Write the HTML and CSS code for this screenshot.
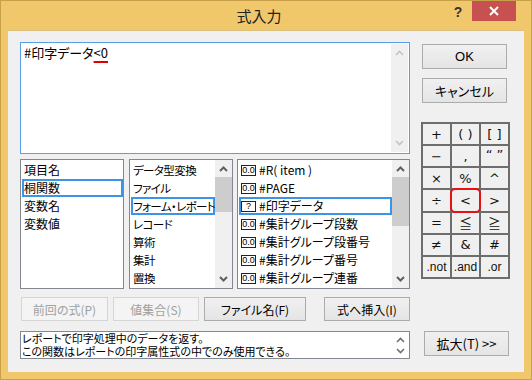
FILE: index.html
```html
<!DOCTYPE html>
<html>
<head>
	<meta charset="UTF-8">
	<title>式入力</title>
	<link rel="stylesheet" href="styles.css">
</head>
<body>
	<div class="window">
		<div class="titlebar">
			<div class="title">式入力</div>
			<div class="help">?</div>
			<div class="close">
				<svg width="10" height="10" viewBox="0 0 10 10"><path d="M1 1 L9 9 M9 1 L1 9" stroke="#fff" stroke-width="2"/></svg>
			</div>
		</div>
		<div class="client">
			<div class="left">
				<!-- 式エリア -->
				<div class="expr">
					<div class="expr-text">#印字データ<span class="err">&lt;0</span></div>
					<div class="vscroll plain">
						<svg class="arrow" width="9" height="6" viewBox="0 0 9 6"><path d="M1 5 L4.5 1.5 L8 5" stroke="#c4c4c4" stroke-width="1.6" fill="none"/></svg>
						<svg class="arrow" width="9" height="6" viewBox="0 0 9 6"><path d="M1 1 L4.5 4.5 L8 1" stroke="#c4c4c4" stroke-width="1.6" fill="none"/></svg>
					</div>
				</div>

				<!-- リスト -->
				<div class="lists">
					<div class="list list-1">
						<div class="items">
							<div class="item">項目名</div>
							<div class="item selected">桐関数</div>
							<div class="item">変数名</div>
							<div class="item">変数値</div>
						</div>
					</div>
					<div class="list list-2">
						<div class="items">
							<div class="item">データ型変換</div>
							<div class="item">ファイル</div>
							<div class="item selected">フォーム・レポート</div>
							<div class="item">レコード</div>
							<div class="item">算術</div>
							<div class="item">集計</div>
							<div class="item">置換</div>
						</div>
						<div class="vscroll">
							<svg class="arrow" width="9" height="6" viewBox="0 0 9 6"><path d="M1 5 L4.5 1.5 L8 5" stroke="#606060" stroke-width="2" fill="none"/></svg>
							<div class="thumb thumb-2"></div>
							<div class="track"></div>
							<svg class="arrow" width="9" height="6" viewBox="0 0 9 6"><path d="M1 1 L4.5 4.5 L8 1" stroke="#606060" stroke-width="2" fill="none"/></svg>
						</div>
					</div>
					<div class="list list-3">
						<div class="items">
							<div class="item"><span class="ico">0.0</span>#R( item )</div>
							<div class="item"><span class="ico">0.0</span>#PAGE</div>
							<div class="item selected"><span class="ico">?</span>#印字データ</div>
							<div class="item"><span class="ico">0.0</span>#集計グループ段数</div>
							<div class="item"><span class="ico">0.0</span>#集計グループ段番号</div>
							<div class="item"><span class="ico">0.0</span>#集計グループ番号</div>
							<div class="item"><span class="ico">0.0</span>#集計グループ連番</div>
						</div>
						<div class="vscroll">
							<svg class="arrow" width="9" height="6" viewBox="0 0 9 6"><path d="M1 5 L4.5 1.5 L8 5" stroke="#606060" stroke-width="2" fill="none"/></svg>
							<div class="thumb thumb-3"></div>
							<div class="track"></div>
							<svg class="arrow" width="9" height="6" viewBox="0 0 9 6"><path d="M1 1 L4.5 4.5 L8 1" stroke="#606060" stroke-width="2" fill="none"/></svg>
						</div>
					</div>
				</div>

				<!-- ボタン -->
				<div class="btn-row">
					<div class="btn disabled w-prev">前回の式(P)</div>
					<div class="btn disabled w-set">値集合(S)</div>
					<div class="btn w-file">ファイル名(F)</div>
					<div class="btn w-insert">式へ挿入(I)</div>
				</div>

				<!-- 説明 -->
				<div class="status">
					<div class="status-text">
						<div>レポートで印字処理中のデータを返す。</div>
						<div>この関数はレポートの印字属性式の中でのみ使用できる。</div>
					</div>
					<div class="status-scroll">
						<svg width="9" height="6" viewBox="0 0 9 6"><path d="M1 5 L4.5 1.5 L8 5" stroke="#707070" stroke-width="1.6" fill="none"/></svg>
						<svg width="9" height="6" viewBox="0 0 9 6"><path d="M1 1 L4.5 4.5 L8 1" stroke="#707070" stroke-width="1.6" fill="none"/></svg>
					</div>
				</div>
			</div>

			<div class="right">
				<div class="btn big ok">OK</div>
				<div class="btn big cancel">キャンセル</div>
				<div class="ops">
					<div class="op">+</div>
					<div class="op">( )</div>
					<div class="op">[ ]</div>
					<div class="op">−</div>
					<div class="op">,</div>
					<div class="op quote">“ ”</div>
					<div class="op">×</div>
					<div class="op">%</div>
					<div class="op">^</div>
					<div class="op">÷</div>
					<div class="op active">&lt;</div>
					<div class="op">&gt;</div>
					<div class="op">=</div>
					<div class="op jp">≦</div>
					<div class="op jp">≧</div>
					<div class="op">≠</div>
					<div class="op">&amp;</div>
					<div class="op">#</div>
					<div class="op word">.not</div>
					<div class="op word">.and</div>
					<div class="op word">.or</div>
				</div>
				<div class="btn big expand">拡大(T) &gt;&gt;</div>
			</div>
		</div>
	</div>
</body>
</html>
```

FILE: styles.css
```css
body {
	margin: 0;
	padding: 0;
	font-family: "Noto Sans CJK JP", "Liberation Sans", sans-serif;
	font-feature-settings: "palt";
	font-size: 12px;
	color: #000;
}
.window {
	width: 532px;
	height: 380px;
	box-sizing: border-box;
	background-color: #f0c86b;
	border: 1px solid #c9a04a;
	padding: 0 7px 7px 7px;
}
.titlebar {
	display: flex;
	height: 29px;
	margin: 0 -7px;
}
.title {
	flex: 1;
	padding-left: 70px;
	text-align: center;
	font-size: 15px;
	line-height: 29px;
	color: #222;
}
.help {
	width: 22px;
	margin-right: 3px;
	text-align: center;
	font-family: "Liberation Sans", sans-serif;
	font-weight: bold;
	font-size: 14px;
	line-height: 23px;
	color: #333;
}
.close {
	width: 44px;
	height: 20px;
	margin-right: 15px;
	background-color: #c75050;
	display: flex;
	align-items: center;
	justify-content: center;
}
.client {
	height: 342px;
	box-sizing: border-box;
	background-color: #f0f0f0;
	border-top: 1px solid #dcc07f;
	padding: 11px 0 0 12px;
	display: flex;
}
.left {
	width: 390px;
	display: flex;
	flex-direction: column;
}

/* 式エリア */
.expr {
	height: 112px;
	box-sizing: border-box;
	background-color: #fff;
	border: 1px solid #5aa0e6;
	display: flex;
}
.expr-text {
	flex: 1;
	padding: 2px 3px;
	font-size: 13px;
	line-height: 16px;
}
.err {
	text-decoration: underline;
	text-decoration-color: #e00000;
	text-decoration-thickness: 2px;
	text-underline-offset: 3px;
}
.vscroll {
	width: 17px;
	background-color: #f0f0f0;
	display: flex;
	flex-direction: column;
	align-items: center;
}
.vscroll.plain {
	justify-content: space-between;
	padding: 6px 0;
	box-sizing: border-box;
	margin: 1px;
}
.arrow {
	flex: none;
}
.list .vscroll .arrow:first-child {
	margin: 6px 0 5px;
}
.list .vscroll .arrow:last-child {
	margin: 5px 0 6px;
}
.thumb {
	width: 17px;
	background-color: #cdcdcd;
}
.thumb-2 {
	height: 35px;
}
.thumb-3 {
	height: 49px;
}
.track {
	flex: 1;
}

/* リスト */
.lists {
	display: flex;
	height: 130px;
	margin-top: 5px;
}
.list {
	box-sizing: border-box;
	height: 130px;
	background-color: #fff;
	border: 1px solid #828790;
	display: flex;
}
.list-1 {
	width: 104px;
}
.list-2 {
	width: 104px;
	margin-left: 5px;
}
.list-3 {
	width: 173px;
	margin-left: 4px;
}
.items {
	flex: 1;
	min-width: 0;
	padding: 1px 0 0 1px;
}
.item {
	height: 18px;
	box-sizing: border-box;
	border: 2px solid transparent;
	line-height: 14px;
	font-size: 12px;
	white-space: nowrap;
	display: flex;
	align-items: center;
}
.list-2 .item {
	font-size: 11.5px;
	letter-spacing: -0.6px;
}
.item.selected {
	border-color: #3c94e6;
}
.ico {
	width: 15px;
	height: 11px;
	box-sizing: border-box;
	border: 1px solid #222;
	margin-right: 3px;
	font-family: "Liberation Sans", sans-serif;
	font-size: 9px;
	line-height: 9px;
	text-align: center;
	letter-spacing: 0;
}

/* ボタン */
.btn-row {
	display: flex;
	margin-top: 8px;
	height: 24px;
}
.btn {
	box-sizing: border-box;
	height: 24px;
	border: 1px solid #acacac;
	background: linear-gradient(#f0f0f0, #e5e5e5);
	display: flex;
	align-items: center;
	justify-content: center;
	font-size: 12px;
}
.btn.disabled {
	border-color: #d5d5d5;
	background: #f4f4f4;
	color: #a0a0a0;
}
.w-prev {
	width: 87px;
	margin-left: 1px;
}
.w-set {
	width: 86px;
	margin-left: 5px;
}
.w-file {
	width: 102px;
	margin-left: 5px;
}
.w-insert {
	width: 86px;
	margin-left: auto;
}

/* 説明 */
.status {
	margin-top: 10px;
	height: 28px;
	box-sizing: border-box;
	background-color: #fff;
	border: 1px solid #828790;
	display: flex;
}
.status-text {
	flex: 1;
	padding-left: 1px;
	font-size: 11px;
	line-height: 13px;
	white-space: nowrap;
}
.status-scroll {
	width: 17px;
	display: flex;
	flex-direction: column;
	align-items: center;
	justify-content: space-between;
	padding: 5px 0 4px;
	box-sizing: border-box;
}

/* 右側 */
.right {
	width: 89px;
	margin-left: 11px;
	display: flex;
	flex-direction: column;
}
.btn.big {
	width: 85px;
	height: 25px;
	font-size: 13px;
}
.ok {
	margin: 2px 0 0 1px;
	font-family: "Liberation Sans", sans-serif;
}
.cancel {
	margin: 9px 0 0 1px;
}
.ops {
	margin-top: 19px;
	width: 89px;
	height: 157px;
	box-sizing: border-box;
	padding: 2px;
	background-color: #6d6d6d;
	display: grid;
	grid-template-columns: repeat(3, 1fr);
	grid-template-rows: repeat(7, 1fr);
	gap: 2px;
}
.op {
	background-color: #f0f0f0;
	display: flex;
	align-items: center;
	justify-content: center;
	font-family: "DejaVu Sans", sans-serif;
	font-weight: normal;
	font-size: 13px;
	color: #111;
}
.op.quote {
	font-size: 13px;
	align-items: flex-start;
	padding-top: 1px;
}
.op.jp {
	font-family: "Noto Sans CJK JP", sans-serif;
	font-size: 13px;
}
.op.word {
	font-family: "Liberation Sans", sans-serif;
	font-size: 12px;
}
.op.active {
	position: relative;
	z-index: 1;
	border-radius: 3px;
	box-shadow: 0 0 0 2px #e81010;
}
.expand {
	margin: 52px 0 0 3px;
}
```
